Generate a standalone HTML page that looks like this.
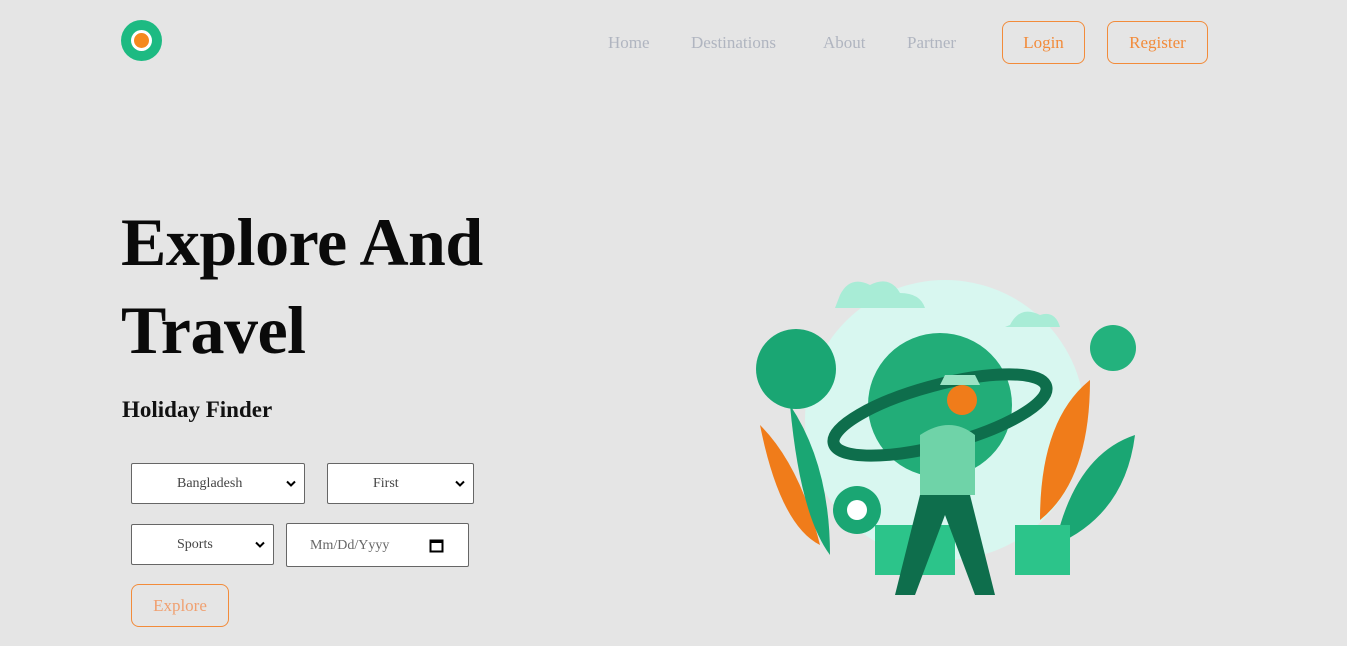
<!DOCTYPE html>
<html><head><meta charset="utf-8"><style>
*{margin:0;padding:0;box-sizing:border-box}
body{width:1347px;height:646px;background:#e5e5e5;font-family:"Liberation Serif",serif;position:relative;overflow:hidden}
.a{position:absolute}
.nav{color:#b0b5c0;font-size:17px;top:33px}
.btn{border:1px solid #f28b3a;color:#f28b3a;border-radius:8px;font-size:17px;text-align:center;background:transparent}
.box{background:#fff;border:1px solid #666;border-radius:2px;font-size:14px;color:#444}
.box span{position:absolute;top:52%;transform:translateY(-50%)}
.chev{position:absolute;right:8px;top:50%;transform:translateY(-50%)}
</style></head><body>
<div class="a" style="left:121px;top:20px;width:41px;height:41px;border-radius:50%;background:#1dba82"></div>
<div class="a" style="left:131px;top:30px;width:21px;height:21px;border-radius:50%;background:#fff"></div>
<div class="a" style="left:134px;top:33px;width:15px;height:15px;border-radius:50%;background:#f5891e"></div>
<div class="a nav" style="left:608px">Home</div>
<div class="a nav" style="left:691px">Destinations</div>
<div class="a nav" style="left:823px">About</div>
<div class="a nav" style="left:907px">Partner</div>
<div class="a btn" style="left:1002px;top:21px;width:83px;height:43px;line-height:41px">Login</div>
<div class="a btn" style="left:1107px;top:21px;width:101px;height:43px;line-height:41px">Register</div>
<div class="a" style="left:121px;top:198px;font-size:68px;font-weight:bold;line-height:88px;color:#0a0a0a;letter-spacing:-0.5px">Explore And<br>Travel</div>
<div class="a" style="left:122px;top:397px;font-size:23px;font-weight:bold;color:#111">Holiday Finder</div>
<div class="a box" style="left:131px;top:463px;width:174px;height:41px"><span style="left:45px">Bangladesh</span><svg class="chev" width="10" height="7"><path d="M1 1l4 4 4-4" stroke="#000" stroke-width="2" fill="none"/></svg></div>
<div class="a box" style="left:327px;top:463px;width:147px;height:41px"><span style="left:45px">First</span><svg class="chev" width="10" height="7"><path d="M1 1l4 4 4-4" stroke="#000" stroke-width="2" fill="none"/></svg></div>
<div class="a box" style="left:131px;top:524px;width:143px;height:41px"><span style="left:45px">Sports</span><svg class="chev" width="10" height="7"><path d="M1 1l4 4 4-4" stroke="#000" stroke-width="2" fill="none"/></svg></div>
<div class="a box" style="left:286px;top:523px;width:183px;height:44px"><span style="left:23px;color:#666">Mm/Dd/Yyyy</span><svg class="a" style="left:142px;top:14px" width="15" height="15"><rect x="1.5" y="2.5" width="12" height="11" fill="none" stroke="#000" stroke-width="2"/><rect x="1" y="2" width="13" height="3"/></svg></div>
<div class="a btn" style="left:131px;top:584px;width:98px;height:43px;line-height:41px;color:#f0a070">Explore</div>
<svg class="a" style="left:750px;top:255px" width="400" height="365" viewBox="0 0 400 365">
<circle cx="195" cy="165" r="140" fill="#d8f7f0"/>
<path d="M90 40 q10-20 30-10 q20-10 30 8 q20 0 25 15 h-90z" fill="#a8ecd6"/>
<path d="M260 70 q10-20 30-10 q15-5 20 12 h-55z" fill="#a8ecd6"/>
<circle cx="46" cy="114" r="40" fill="#1aa673"/>
<circle cx="363" cy="93" r="23" fill="#23b27d"/>
<circle cx="190" cy="150" r="72" fill="#22ad78"/>
<ellipse cx="190" cy="160" rx="110" ry="30" fill="none" stroke="#0e6e4c" stroke-width="12" transform="rotate(-15 190 160)"/>
<path d="M10 170 q40 40 60 120 q-40-20-60-120z" fill="#f07c1a"/>
<path d="M40 150 q40 60 40 150 q-30-40-40-150z" fill="#1aa673"/>
<path d="M340 125 q-50 40-50 140 q50-40 50-140z" fill="#f07c1a"/>
<path d="M385 180 q-60 20-80 110 q70-30 80-110z" fill="#1aa673"/>
<path d="M125 270 h80 v50 h-80z" fill="#2cc48a"/>
<path d="M265 270 h55 v50 h-55z" fill="#2cc48a"/>
<circle cx="107" cy="255" r="24" fill="#1aa673"/><circle cx="107" cy="255" r="10" fill="#fff"/>
<path d="M170 180 q30-20 55 0 v60 h-55z" fill="#6fd3a8"/>
<path d="M170 240 l-25 100 h20 l30-80 l30 80 h20 l-25-100z" fill="#0e6e4c"/>
<circle cx="212" cy="145" r="15" fill="#f07c1a"/>
<path d="M190 130 h40 l-5-10 h-30z" fill="#9be3c4"/>
</svg>
</body></html>
